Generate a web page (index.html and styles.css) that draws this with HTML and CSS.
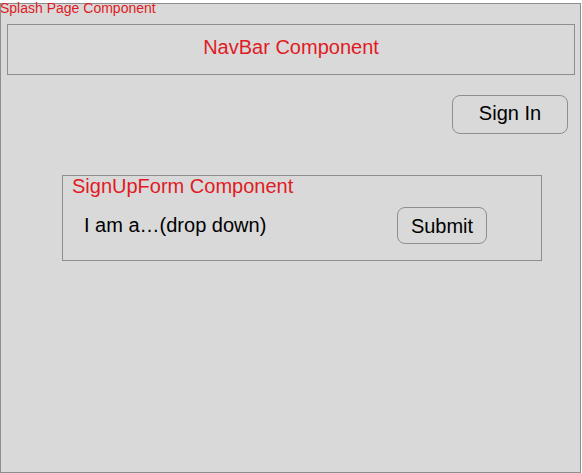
FILE: index.html
```html
<!DOCTYPE html>
<html>
<head>
<meta charset="utf-8">
<link rel="stylesheet" href="styles.css">
</head>
<body>
<div class="splash">
  <span class="splash-label">Splash Page Component</span>
  <div class="navbar">NavBar Component</div>
  <div class="actions"><button class="btn btn-signin">Sign In</button></div>
  <div class="signup">
    <div class="signup-title">SignUpForm Component</div>
    <div class="signup-row">
      <span class="dropdown">I am a…(drop down)</span>
      <button class="btn btn-submit">Submit</button>
    </div>
  </div>
</div>
</body>
</html>
```
FILE: styles.css
```css
html, body {
  margin: 0;
  padding: 0;
  background: #ffffff;
}
body {
  font-family: "Liberation Sans", Arial, sans-serif;
  width: 582px;
  height: 473px;
  overflow: hidden;
}
.splash {
  position: relative;
  box-sizing: border-box;
  width: 581px;
  height: 470px;
  margin-top: 3px;
  border: 1px solid #8e8e8e;
  background: #d9d9d9;
  padding: 20px 5px 0 6px;
  display: flex;
  flex-direction: column;
}
.splash-label {
  position: absolute;
  left: -1px;
  top: -4px;
  color: #e01b24;
  font-size: 14px;
  line-height: 16px;
}
.navbar {
  box-sizing: border-box;
  width: 568px;
  height: 51px;
  border: 1px solid #8e8e8e;
  color: #e01b24;
  font-size: 20px;
  display: flex;
  align-items: center;
  justify-content: center;
  padding-bottom: 5px;
}
.actions {
  display: flex;
  justify-content: flex-end;
  margin-top: 20px;
  padding-right: 7px;
}
.btn {
  box-sizing: border-box;
  border: 1px solid #8e8e8e;
  border-radius: 8px;
  background: #d9d9d9;
  font-family: "Liberation Sans", Arial, sans-serif;
  color: #000;
  padding: 0;
}
.btn-signin {
  width: 116px;
  height: 39px;
  font-size: 20px;
  padding-bottom: 3px;
}
.signup {
  box-sizing: border-box;
  width: 480px;
  height: 86px;
  margin-top: 41px;
  margin-left: 55px;
  border: 1px solid #8e8e8e;
  padding: 0 0 0 9px;
}
.signup-title {
  color: #e01b24;
  font-size: 20px;
  line-height: 21px;
}
.signup-row {
  display: flex;
  align-items: center;
  margin-top: 10px;
  padding-left: 12px;
}
.dropdown {
  font-size: 20px;
  width: 313px;
  padding-bottom: 1px;
}
.btn-submit {
  width: 90px;
  height: 37px;
  font-size: 20px;
  padding-top: 1px;
}
```
